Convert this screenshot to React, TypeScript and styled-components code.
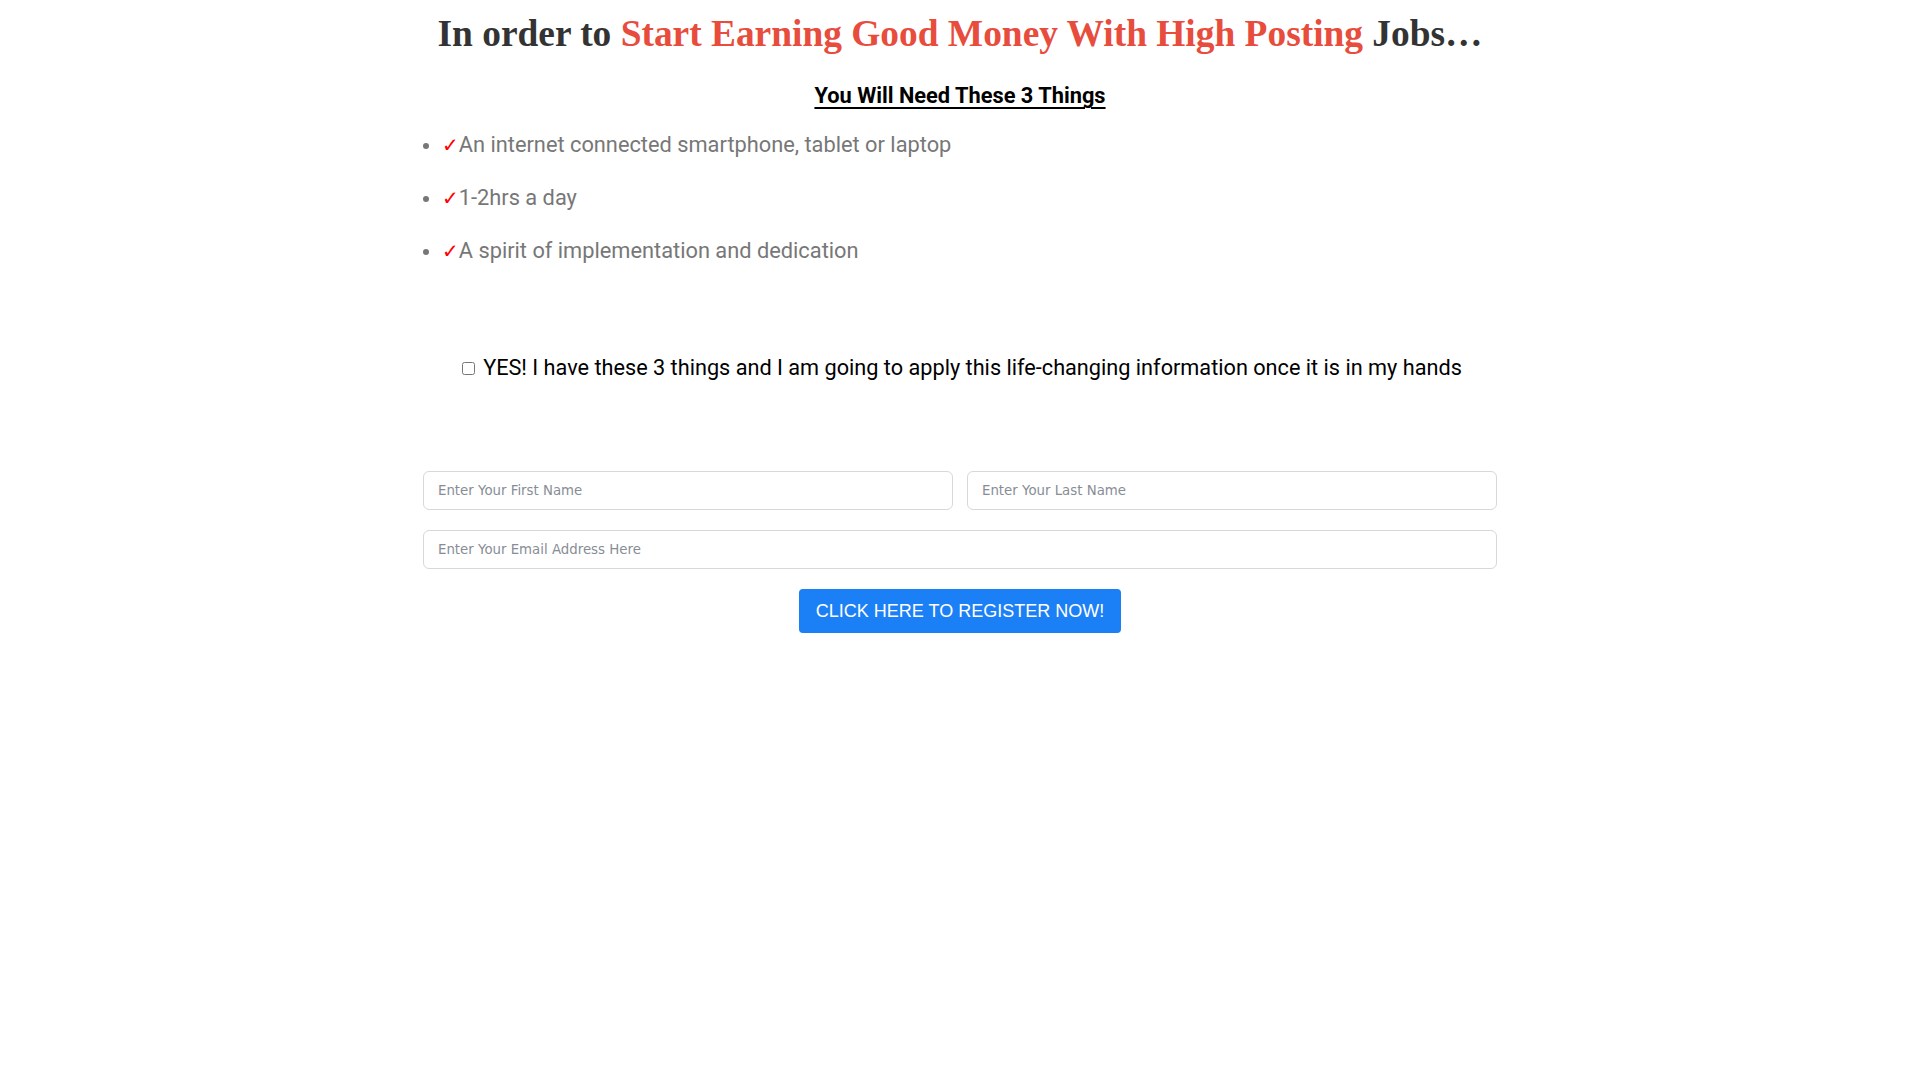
import React from "react";
import styled, { createGlobalStyle } from "styled-components";

const GlobalStyle = createGlobalStyle`
  html, body {
    margin: 0;
    padding: 0;
    background: #ffffff;
  }
  body {
    font-family: Roboto, "Liberation Sans", sans-serif;
  }
  * {
    box-sizing: border-box;
  }
`;

const Page = styled.main`
  width: 1074px;
  margin: 0 auto;
  padding-top: 10px;
`;

const Headline = styled.h1`
  margin: 0;
  font-family: "Liberation Serif", "Times New Roman", serif;
  font-weight: 700;
  font-size: 37.4px;
  line-height: 47px;
  color: #333333;
  text-align: center;
  white-space: nowrap;
`;

const Accent = styled.span`
  color: #e74c3c;
`;

const SubHeading = styled.h3`
  margin: 24px 0 0;
  font-family: Roboto, "Liberation Sans", sans-serif;
  font-weight: 700;
  font-size: 21.8px;
  line-height: 30px;
  color: #000000;
  text-align: center;
  text-decoration: underline;
  text-underline-offset: 4px;
`;

const Needs = styled.ul`
  margin: 19px 0 0;
  padding-left: 19px;
`;

const Need = styled.li`
  font-family: Roboto, "Liberation Sans", sans-serif;
  font-size: 21.8px;
  line-height: 30px;
  color: #777777;
  margin-bottom: 23px;

  &::marker {
    font-size: 20px;
  }

  &:last-child {
    margin-bottom: 0;
  }
`;

const Tick = styled.span`
  color: #ff0000;
  font-family: "DejaVu Sans", sans-serif;
  font-size: 20px;
`;

const Pledge = styled.p`
  margin: 88px 0 0;
  font-family: Roboto, "Liberation Sans", sans-serif;
  font-size: 21.7px;
  line-height: 27px;
  color: #000000;
  text-align: center;
  white-space: nowrap;
`;

const PledgeBox = styled.input`
  margin: 3px 8px 3px 4px;
  width: 13px;
  height: 13px;
`;

const SignupForm = styled.form`
  margin-top: 90px;
  display: flex;
  flex-direction: column;
  gap: 20px;
`;

const NameRow = styled.div`
  display: grid;
  grid-template-columns: 1fr 1fr;
  gap: 14px;
`;

const Field = styled.input`
  display: block;
  width: 100%;
  height: 39px;
  padding: 0 14px;
  border: 1px solid #d8d8d8;
  border-radius: 6px;
  background: #ffffff;
  font-family: "DejaVu Sans", sans-serif;
  font-size: 13.333px;
  color: #333333;
  outline: none;

  &::placeholder {
    color: #878d95;
  }
`;

const Actions = styled.div`
  display: flex;
  justify-content: center;
`;

const RegisterButton = styled.button`
  height: 44px;
  padding: 0 17px;
  border: none;
  border-radius: 4px;
  background: #1b7ff5;
  color: #ffffff;
  font-family: "Liberation Sans", Arial, sans-serif;
  font-size: 18px;
  cursor: pointer;
`;

const needs = [
  "An internet connected smartphone, tablet or laptop",
  "1-2hrs a day",
  "A spirit of implementation and dedication",
];

export default function App() {
  return (
    <>
      <GlobalStyle />
      <Page>
        <Headline>
          In order to <Accent>Start Earning Good Money With High Posting</Accent> Jobs…
        </Headline>
        <SubHeading>You Will Need These 3 Things</SubHeading>
        <Needs>
          {needs.map((n) => (
            <Need key={n}>
              <Tick>✓</Tick>
              {n}
            </Need>
          ))}
        </Needs>
        <Pledge>
          <PledgeBox type="checkbox" />
          YES! I have these 3 things and I am going to apply this life-changing information once it is in my hands
        </Pledge>
        <SignupForm onSubmit={(e) => e.preventDefault()}>
          <NameRow>
            <Field type="text" placeholder="Enter Your First Name" />
            <Field type="text" placeholder="Enter Your Last Name" />
          </NameRow>
          <Field type="email" placeholder="Enter Your Email Address Here" />
          <Actions>
            <RegisterButton type="submit">CLICK HERE TO REGISTER NOW!</RegisterButton>
          </Actions>
        </SignupForm>
      </Page>
    </>
  );
}
